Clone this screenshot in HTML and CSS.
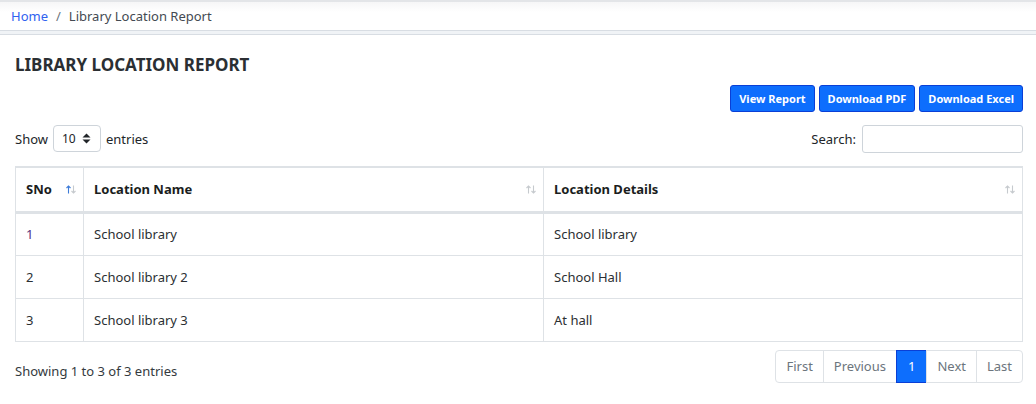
FILE: index.html
```html
<!DOCTYPE html>
<html>
<head>
<meta charset="utf-8">
<link rel="stylesheet" href="styles.css">
</head>
<body>
<div class="topbar">
  <nav class="crumbs"><a class="crumb-link">Home</a><span class="sep">/</span><span class="crumb-cur">Library Location Report</span></nav>
</div>
<div class="strip"></div>
<main class="content">
  <h1 class="title">LIBRARY LOCATION REPORT</h1>
  <div class="actions">
    <button class="btn">View Report</button>
    <button class="btn">Download PDF</button>
    <button class="btn">Download Excel</button>
  </div>
  <div class="controls">
    <div class="length">Show <span class="select">10 <svg class="updown" width="9" height="11" viewBox="0 0 9 11"><path d="M4.5 0.5 L8.5 4.5 L0.5 4.5 Z M4.5 10.5 L8.5 6.5 L0.5 6.5 Z" fill="#212529"/></svg></span> entries</div>
    <div class="search">Search: <span class="input"></span></div>
  </div>
  <table class="grid">
    <colgroup><col class="c1"><col class="c2"><col class="c3"></colgroup>
    <thead>
      <tr>
        <th><span class="th-in">SNo<svg class="sort" width="10" height="9" viewBox="0 0 10 9"><path class="up on" d="M2.5 8.5 V1 M0.5 3 L2.5 1 L4.5 3"/><path class="dn" d="M7.5 0.5 V8 M5.5 6 L7.5 8 L9.5 6"/></svg></span></th>
        <th><span class="th-in">Location Name<svg class="sort" width="10" height="9" viewBox="0 0 10 9"><path class="up" d="M2.5 8.5 V1 M0.5 3 L2.5 1 L4.5 3"/><path class="dn" d="M7.5 0.5 V8 M5.5 6 L7.5 8 L9.5 6"/></svg></span></th>
        <th><span class="th-in">Location Details<svg class="sort" width="10" height="9" viewBox="0 0 10 9"><path class="up" d="M2.5 8.5 V1 M0.5 3 L2.5 1 L4.5 3"/><path class="dn" d="M7.5 0.5 V8 M5.5 6 L7.5 8 L9.5 6"/></svg></span></th>
      </tr>
    </thead>
    <tbody>
      <tr><td class="first">1</td><td>School library</td><td>School library</td></tr>
      <tr><td>2</td><td>School library 2</td><td>School Hall</td></tr>
      <tr><td>3</td><td>School library 3</td><td>At hall</td></tr>
    </tbody>
  </table>
  <div class="footer">
    <div class="info">Showing 1 to 3 of 3 entries</div>
    <div class="pager">
      <span class="pg">First</span><span class="pg">Previous</span><span class="pg on">1</span><span class="pg">Next</span><span class="pg">Last</span>
    </div>
  </div>
</main>
</body>
</html>
```
FILE: styles.css
```css
* { box-sizing: border-box; }
body {
  margin: 0;
  font-family: "Noto Sans", "Segoe UI", sans-serif;
  font-size: 13px;
  color: #212529;
  background: #fff;
}
.topbar {
  border-top: 2px solid #e3e5e8;
  height: 31px;
  background: linear-gradient(#f6f6f7, #ffffff 10px);
  border-bottom: 1px solid #d8dde3;
  padding-left: 11px;
  display: flex;
  align-items: center;
}
.crumbs { display: flex; align-items: center; font-size: 13px; }
.crumb-link { color: #2f62f0; }
.sep { color: #6c757d; margin: 0 8px; }
.crumb-cur { color: #444a52; }
.strip {
  height: 4px;
  background: #f0f3f6;
  border-bottom: 1px solid #d8dde3;
}
.content { padding: 0 13px 0 15px; }
.title {
  margin: 19px 0 0;
  font-size: 17px;
  font-weight: 700;
  color: #2b2f33;
  line-height: 22px;
}
.actions {
  display: flex;
  justify-content: flex-end;
  gap: 4px;
  margin-top: 9px;
}
.btn {
  height: 27px;
  padding: 0 8px;
  background: #0d6efd;
  color: #fff;
  border: 1px solid #0a3fd6;
  border-radius: 3px;
  font-family: inherit;
  font-size: 11px;
  font-weight: 700;
}
.controls {
  display: flex;
  justify-content: space-between;
  align-items: center;
  margin-top: 13px;
  height: 27px;
}
.length { display: flex; align-items: center; gap: 5px; }
.select {
  display: inline-flex;
  align-items: center;
  gap: 6px;
  height: 27px;
  width: 48px;
  padding-left: 8px;
  border: 1px solid #ced4da;
  border-radius: 4px;
  font-size: 12px;
  color: #212529;
}
.search { display: flex; align-items: center; gap: 6px; }
.input {
  width: 161px;
  height: 28px;
  border: 1px solid #ced4da;
  border-radius: 3px;
}
.grid {
  width: 100%;
  border-collapse: collapse;
  margin-top: 14px;
  table-layout: fixed;
}
.c1 { width: 68px; }
.c2 { width: 460px; }
.grid th, .grid td {
  border: 1px solid #dee2e6;
  padding: 0 10px;
  text-align: left;
}
.grid thead th {
  height: 45px;
  border-top: 2px solid #dee2e6;
  border-bottom: 3px solid #dee2e6;
  font-weight: 700;
  color: #1a1d20;
}
.th-in { display: flex; justify-content: space-between; align-items: center; }
.sort { margin-right: -3px; fill: none; stroke-width: 1.1; }
.sort path { stroke: #c6cace; }
.sort path.on { stroke: #3d7bd8; }
.grid td { height: 43px; color: #2b2f33; }
.grid td.first { color: #56307e; }
.footer {
  display: flex;
  justify-content: space-between;
  align-items: center;
  margin-top: 8px;
}
.info { color: #343a40; padding-top: 10px; }
.pager { display: flex; }
.pg {
  height: 33px;
  display: flex;
  align-items: center;
  padding: 0 10px;
  border: 1px solid #dee2e6;
  margin-left: -1px;
  color: #6c757d;
}
.pg:first-child { border-radius: 4px 0 0 4px; }
.pg:last-child { border-radius: 0 4px 4px 0; }
.pg.on { background: #0d6efd; color: #fff; border-color: #0a3fd6; padding: 0 11px; }
```
